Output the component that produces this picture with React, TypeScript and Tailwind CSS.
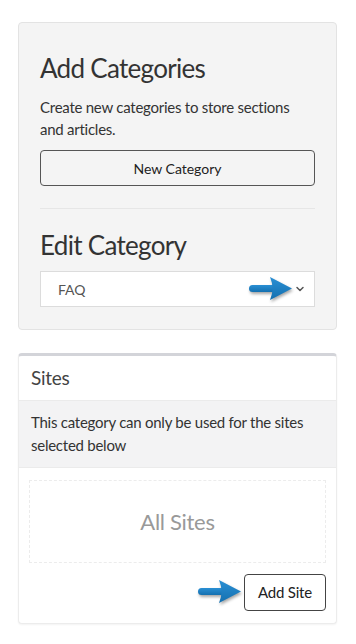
import React from "react";
import { ChevronDown } from "lucide-react";

function Arrow({ className }: { className?: string }) {
  return (
    <svg
      className={className}
      width="46"
      height="26"
      viewBox="0 0 46 26"
      style={{ filter: "drop-shadow(1px 2px 1.5px rgba(0,0,0,0.35))" }}
    >
      <defs>
        <linearGradient id="ag" x1="0" y1="0" x2="0" y2="1">
          <stop offset="0" stopColor="#2a8fd4" />
          <stop offset="1" stopColor="#1470b0" />
        </linearGradient>
      </defs>
      <rect x="1" y="9" width="28" height="7" rx="3.5" fill="url(#ag)" />
      <path d="M22 1 L44 12.5 L22 24 Q27 12.5 22 1 Z" fill="url(#ag)" />
    </svg>
  );
}

export default function App() {
  return (
    <div
      className="w-[356px] h-[644px] bg-white text-[#333]"
      style={{ fontFamily: "Lato, 'Liberation Sans', sans-serif" }}
    >
      <div className="h-[22px]" />
      <div className="ml-[18px] w-[319px] rounded-[4px] border border-[#e3e3e3] bg-[#f4f4f4] px-[21px] pt-[29px] pb-[22px]">
        <h2 className="text-[26px] leading-[32px] tracking-[-0.7px] text-[#333]">Add Categories</h2>
        <p className="mt-[12px] text-[15px] leading-[22px] tracking-[-0.25px] text-[#333]">
          Create new categories to store sections and articles.
        </p>
        <button className="mt-[10px] flex h-[36px] w-full items-center justify-center rounded-[4px] border border-[#555] text-[14px] text-[#222]">
          New Category
        </button>
        <div className="mt-[22px] h-px bg-[#e6e6e6]" />
        <h2 className="mt-[20px] text-[26px] leading-[32px] tracking-[-0.7px] text-[#333]">Edit Category</h2>
        <div className="relative mt-[10px] flex h-[36px] w-full items-center justify-between border border-[#dcdcdc] bg-white pl-[17px] pr-[8px]">
          <span className="text-[14px] text-[#555]">FAQ</span>
          <ChevronDown size={12} strokeWidth={3} className="text-[#555]" />
          <Arrow className="absolute left-[207px] top-[4px]" />
        </div>
      </div>

      <div className="h-[23px]" />
      <div className="ml-[18px] w-[319px] overflow-hidden rounded-[4px] border-x border-b border-[#ececec] border-t-[3px] border-t-[#d3d4d9] bg-white shadow-[0_1px_2px_rgba(0,0,0,0.05)]">
        <div className="flex h-[44px] items-center px-[12px] text-[19px] tracking-[-0.3px] text-[#444]">Sites</div>
        <div className="border-y border-[#ebebeb] bg-[#f3f3f4] px-[12px] py-[10px] text-[15px] leading-[23px] tracking-[-0.25px] text-[#333]">
          This category can only be used for the sites selected below
        </div>
        <div className="px-[10px] pt-[12px] pb-[12px]">
          <div className="flex h-[83px] items-center justify-center border border-dashed border-[#ececec] text-[22px] tracking-[-0.3px] text-[#999]">
            All Sites
          </div>
          <div className="relative mt-[11px] flex justify-end">
            <Arrow className="absolute left-[168px] top-[5px]" />
            <button className="flex h-[37px] w-[82px] items-center justify-center rounded-[4px] border border-[#444] bg-white text-[15px] tracking-[-0.2px] text-[#222]">
              Add Site
            </button>
          </div>
        </div>
      </div>
    </div>
  );
}
